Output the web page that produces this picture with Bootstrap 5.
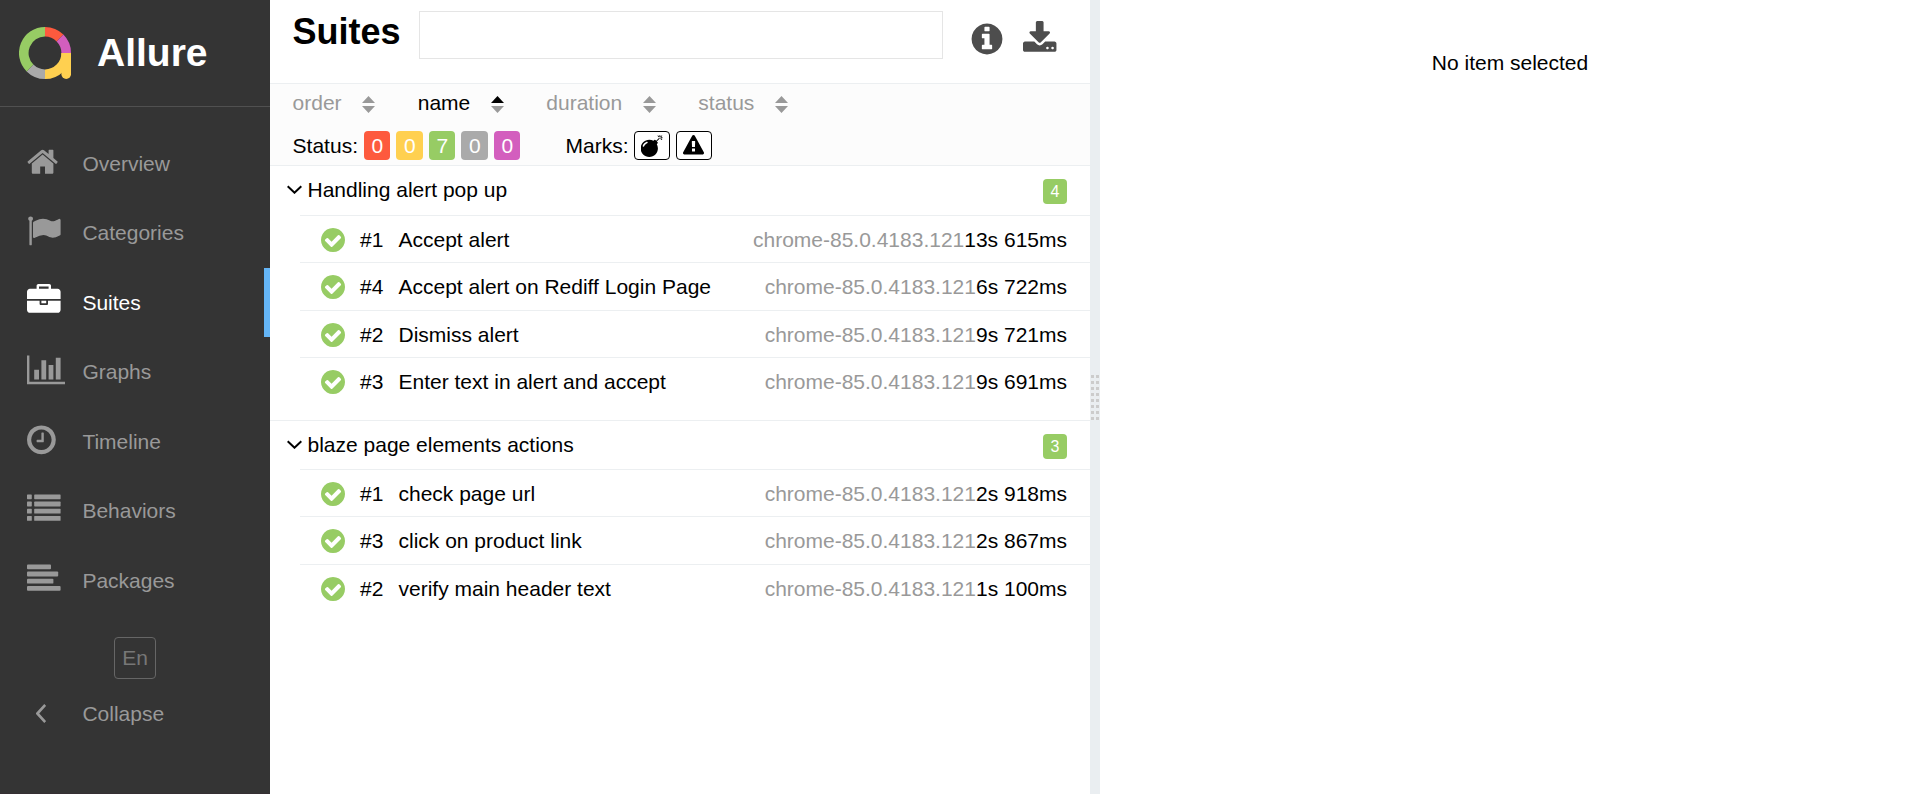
<!DOCTYPE html>
<html lang="en">
<head>
<meta charset="utf-8">
<title>Allure Report</title>
<link href="https://cdn.jsdelivr.net/npm/bootstrap@5.3.0/dist/css/bootstrap.min.css" rel="stylesheet">
<style>
body{font-family:"Liberation Sans",Arial,sans-serif;font-size:21px;line-height:30px;color:#000;height:794px;overflow:hidden}
svg{display:block;fill:currentColor;flex:none}
.side{width:270px;background:#343434;color:#999;border-bottom:1px solid #352f33}
.brand{height:107px;border-bottom:1px solid #505050;padding-left:19px;color:#fff}
.brand svg{margin-top:27px}
.brand-name{font-size:39px;font-weight:700;line-height:44px;margin:31px 0 0 26px}
.menu{padding-top:21.5px}
.side-link{height:69.6px;padding-left:27px;color:inherit;text-decoration:none}
.side-link .ico{width:55.4px;padding-top:16px}
.side-link .lbl{padding-top:20px}
.side-link.active{color:#fff;box-shadow:inset -6px 0 #64b5f6}
.lang{width:42px;height:42px;border:1px solid #666;border-radius:4px;color:#777;margin:21px 0 0 114px;line-height:40px}
.collapse-link{padding-left:36px;margin-top:20px}
.collapse-link svg{margin:5px 36.4px 0 0}
.list-pane{width:820px}
.head{height:84px;border-bottom:1px solid #eceff1;padding-left:22.5px}
.head h1{font-size:36px;font-weight:700;line-height:42px;margin:11px 0 0;width:126.5px}
.search{width:524px;height:48px;border:1px solid #e5e5e5;border-radius:0;margin-top:11px;padding:0}
.tools{color:#4d4d4d;margin:21px 0 0 26px;gap:18px}
.bar{height:82px;background:#fcfcfc;border-bottom:1px solid #eceff1;padding:4px 0 0 22.6px}
.sorter{color:#999;gap:20.6px;margin-right:42.5px}
.sorter.on{color:#000}
.sorts{height:30px}
.filters{margin-top:13px;height:29px}
.chip{width:26.5px;height:29px;border-radius:4px;color:#fff;line-height:29px;margin-right:6px}
.failed{background:#fd5a3e}.broken{background:#ffd050}.passed{background:#97cc64}.skipped{background:#aaa}.unknown{background:#d35ebe}
.status-lbl{width:71.4px}
.marks-lbl{width:68.5px;margin-left:39px}
.mark-btn{width:36px;height:29px;border:1px solid #000;border-radius:4px;background:#fff;margin-right:6px}
.suite-head{height:49.2px;padding:0 23px 0 17px}
.suite-head svg{margin:19px 5.5px 0 0}
.suite-head .ttl{padding-top:9px}
.count{width:24px;height:25px;border-radius:4px;color:#fff;font-size:16px;line-height:25px;margin-top:13px}
.suite{padding-bottom:15.8px}
.suite + .suite{border-top:1px solid #eceff1}
.suite + .suite .suite-head{height:48.5px}
.test-row{height:47.2px;border-top:1px solid #eceff1;margin-left:30px;padding:9px 23px 0 19px}
.test-row svg{color:#97cc64;margin:1px 13px 0 0}
.num{width:38.5px}
.env{color:#999}
.gutter{width:10px;background:#eaeef1}
.grip{width:8px;height:45px;background:repeating-linear-gradient(90deg,transparent 0 3px,#eaeef1 3px 5px),repeating-linear-gradient(#ccc 0 3px,transparent 3px 6px)}
.detail{padding-top:48px}
</style>
</head>
<body class="d-flex bg-white">
<svg width="0" height="0" class="position-absolute">
<defs>
<symbol id="ok" viewBox="0 0 1792 1792"><path d="M1412 734q0-28-18-46l-91-90q-19-19-45-19t-45 19l-408 407-226-226q-19-19-45-19t-45 19l-91 90q-18 18-18 46 0 27 18 45l362 362q19 19 45 19 27 0 46-19l543-543q18-18 18-45zm252 162q0 209-103 385.5t-279.5 279.5-385.5 103-385.5-103-279.5-279.5-103-385.5 103-385.5 279.5-279.5 385.5-103 385.5 103 279.5 279.5 103 385.5z"/></symbol>
<symbol id="down" viewBox="0 0 15 9"><path d="M.7 1.2 7.5 7.7 14.3 1.2" fill="none" stroke="#000" stroke-width="2"/></symbol>
</defs>
</svg>

<nav class="side h-100 flex-shrink-0">
  <div class="brand d-flex">
    <svg width="52" height="52" viewBox="0 0 52 52" fill="none">
      <g fill="none" stroke-width="9.6">
      <path stroke="#ffd050" d="M47.2 26A21.2 21.2 0 0 1 26 47.2"/>
      <path stroke="#aaa" d="M26 47.2A21.2 21.2 0 0 1 11 41"/>
      <path stroke="#97cc64" d="M11 41A21.2 21.2 0 0 1 26 4.8"/>
      <path stroke="#fd5a3e" d="M26 4.8A21.2 21.2 0 0 1 41 11"/>
      <path stroke="#d35ebe" d="M41 11A21.2 21.2 0 0 1 47.2 26"/></g>
      <path fill="#ffd050" d="M42.4 26H52V47.2a4.8 4.8 0 0 1-9.6 0z"/>
    </svg>
    <div class="brand-name">Allure</div>
  </div>
  <div class="menu d-flex flex-column">
    <a class="side-link d-flex"><span class="ico"><svg width="33.6" height="33.6" viewBox="64 0 1792 1792"><path d="M1472 992v480q0 26-19 45t-45 19h-384v-384h-256v384h-384q-26 0-45-19t-19-45v-480q0-1 .5-3t.5-3l575-474 575 474q1 2 1 6zm223-69l-62 74q-8 9-21 11h-3q-13 0-21-7l-692-577-692 577q-12 8-24 7-13-2-21-11l-62-74q-8-10-7-23.5t11-21.5l719-599q32-26 76-26t76 26l244 204v-195q0-14 9-23t23-9h192q14 0 23 9t9 23v408l219 182q10 8 11 21.5t-7 23.5z"/></svg></span><span class="lbl">Overview</span></a>
    <a class="side-link d-flex"><span class="ico"><svg width="33.6" height="33.6" viewBox="0 0 1792 1792"><path d="M320 256q0 72-64 110v1266q0 13-9.5 22.5t-22.5 9.5h-64q-13 0-22.5-9.5t-9.5-22.5v-1266q-64-38-64-110 0-53 37.5-90.5t90.5-37.5 90.5 37.5 37.5 90.5zm1472 64v763q0 25-12.5 38.5t-39.5 27.5q-215 116-369 116-61 0-123.5-22t-108.5-48-115.5-48-142.5-22q-192 0-464 146-17 9-33 9-26 0-45-19t-19-45v-742q0-32 31-55 21-14 79-43 236-120 421-120 107 0 200 29t219 88q38 19 88 19 54 0 117.5-21t110-47 88-47 54.5-21q26 0 45 19t19 45z"/></svg></span><span class="lbl">Categories</span></a>
    <a class="side-link active d-flex"><span class="ico"><svg width="33.6" height="33.6" viewBox="0 0 1792 1792"><path d="M640 256h512v-128h-512v128zm1152 640v480q0 66-47 113t-113 47h-1472q-66 0-113-47t-47-113v-480h672v160q0 26 19 45t45 19h320q26 0 45-19t19-45v-160h672zm-768 0v128h-256v-128h256zm768-480v384h-1792v-384q0-66 47-113t113-47h352v-160q0-40 28-68t68-28h576q40 0 68 28t28 68v160h352q66 0 113 47t47 113z"/></svg></span><span class="lbl">Suites</span></a>
    <a class="side-link d-flex"><span class="ico"><svg width="38.4" height="33.6" viewBox="0 0 2048 1792"><path d="M640 896v512h-256v-512h256zm384-512v1024h-256v-1024h256zm1024 1152v128h-2048v-1536h128v1408h1920zm-640-896v768h-256v-768h256zm384-384v1152h-256v-1152h256z"/></svg></span><span class="lbl">Graphs</span></a>
    <a class="side-link d-flex"><span class="ico"><svg width="33.6" height="33.6" viewBox="128 0 1792 1792"><path d="M1024 544v448q0 14-9 23t-23 9h-320q-14 0-23-9t-9-23v-64q0-14 9-23t23-9h224v-352q0-14 9-23t23-9h64q14 0 23 9t9 23zm416 352q0-148-73-273t-198-198-273-73-273 73-198 198-73 273 73 273 198 198 273 73 273-73 198-198 73-273zm224 0q0 209-103 385.5t-279.5 279.5-385.5 103-385.5-103-279.5-279.5-103-385.5 103-385.5 279.5-279.5 385.5-103 385.5 103 279.5 279.5 103 385.5z"/></svg></span><span class="lbl">Timeline</span></a>
    <a class="side-link d-flex"><span class="ico"><svg width="33.6" height="33.6" viewBox="0 0 1792 1792"><g><rect y="128" width="256" height="256" rx="32"/><rect y="512" width="256" height="256" rx="32"/><rect y="896" width="256" height="256" rx="32"/><rect y="1280" width="256" height="256" rx="32"/><rect x="384" y="128" width="1408" height="256" rx="32"/><rect x="384" y="512" width="1408" height="256" rx="32"/><rect x="384" y="896" width="1408" height="256" rx="32"/><rect x="384" y="1280" width="1408" height="256" rx="32"/></g></svg></span><span class="lbl">Behaviors</span></a>
    <a class="side-link d-flex"><span class="ico"><svg width="33.6" height="33.6" viewBox="0 0 1792 1792"><rect y="128" width="1280" height="256" rx="50"/><rect y="512" width="1664" height="256" rx="50"/><rect y="896" width="1408" height="256" rx="50"/><rect y="1280" width="1792" height="256" rx="50"/></svg></span><span class="lbl">Packages</span></a>
  </div>
  <div class="lang text-center">En</div>
  <div class="collapse-link d-flex"><svg width="10" height="19" viewBox="0 0 10 19"><path d="M9.2 1 1.4 9.5 9.2 18" fill="none" stroke="#999" stroke-width="2.6"/></svg><span>Collapse</span></div>
</nav>

<main class="list-pane h-100 flex-shrink-0">
  <div class="head d-flex">
    <h1>Suites</h1>
    <input class="search form-control flex-shrink-0" type="text" aria-label="Search">
    <div class="tools d-flex">
      <svg width="36" height="36" viewBox="0 0 1792 1792"><path d="M1152 1376v-160q0-14-9-23t-23-9h-96v-512q0-14-9-23t-23-9h-320q-14 0-23 9t-9 23v160q0 14 9 23t23 9h96v320h-96q-14 0-23 9t-9 23v160q0 14 9 23t23 9h448q14 0 23-9t9-23zm-128-896v-160q0-14-9-23t-23-9h-192q-14 0-23 9t-9 23v160q0 14 9 23t23 9h192q14 0 23-9t9-23zm640 416q0 209-103 385.5t-279.5 279.5-385.5 103-385.5-103-279.5-279.5-103-385.5 103-385.5 279.5-279.5 385.5-103 385.5 103 279.5 279.5 103 385.5z"/></svg>
      <svg width="36" height="36" viewBox="64 0 1792 1792"><path d="M1344 1344q0-26-19-45t-45-19-45 19-19 45 19 45 45 19 45-19 19-45zm256 0q0-26-19-45t-45-19-45 19-19 45 19 45 45 19 45-19 19-45zm128-224v320q0 40-28 68t-68 28h-1472q-40 0-68-28t-28-68v-320q0-40 28-68t68-28h465l135 136q58 56 136 56t136-56l136-136h464q40 0 68 28t28 68zm-325-569q17 41-14 70l-448 448q-18 19-45 19t-45-19l-448-448q-31-29-14-70 17-39 59-39h256v-448q0-26 19-45t45-19h256q26 0 45 19t19 45v448h256q42 0 59 39z"/></svg>
    </div>
  </div>
  <div class="bar">
    <div class="sorts d-flex">
      <div class="sorter d-flex"><span>order</span><svg class="mt-2" width="13" height="17" viewBox="0 0 13 17"><path fill="#999" d="M0 7 6.5 0 13 7zM0 10H13L6.5 17z"/></svg></div>
      <div class="sorter on d-flex"><span>name</span><svg class="mt-2" width="13" height="17" viewBox="0 0 13 17"><path d="M0 7 6.5 0 13 7z"/><path fill="#999" d="M0 10H13L6.5 17z"/></svg></div>
      <div class="sorter d-flex"><span>duration</span><svg class="mt-2" width="13" height="17" viewBox="0 0 13 17"><path fill="#999" d="M0 7 6.5 0 13 7zM0 10H13L6.5 17z"/></svg></div>
      <div class="sorter d-flex"><span>status</span><svg class="mt-2" width="13" height="17" viewBox="0 0 13 17"><path fill="#999" d="M0 7 6.5 0 13 7zM0 10H13L6.5 17z"/></svg></div>
    </div>
    <div class="filters d-flex">
      <span class="status-lbl">Status:</span>
      <span class="chip failed text-center">0</span><span class="chip broken text-center">0</span><span class="chip passed text-center">7</span><span class="chip skipped text-center">0</span><span class="chip unknown text-center">0</span>
      <span class="marks-lbl">Marks:</span>
      <span class="mark-btn d-flex justify-content-center align-items-center"><svg width="22" height="22" viewBox="30 0 1792 1792"><path d="M571 589q-10-25-34-35t-49 0q-108 44-191 127t-127 191q-10 25 0 49t35 34q13 5 24 5 42 0 60-40 34-84 98.500-148.500t148.500-98.500q25-11 35-35t0-49zm942-356l46 46-244 243 68 68q19 19 19 45.500t-19 45.500l-64 64q89 161 89 343 0 143-55.500 273.500t-150 225-225 150-273.500 55.500-273.500-55.500-225-150-150-225-55.500-273.500 55.500-273.500 150-225 225-150 273.500-55.500q182 0 343 89l64-64q19-19 45.500-19t45.500 19l68 68zm8-56q-10 10-22 10-13 0-23-10l-91-90q-9-10-9-23t9-23q10-9 23-9t23 9l90 91q10 9 10 22.500t-10 22.500zm230 230q-11 9-23 9t-23-9l-90-91q-10-9-10-22.500t10-22.500q9-10 22.500-10t22.500 10l91 90q9 10 9 23t-9 23zm41-183q0 14-9 23t-23 9h-96q-14 0-23-9t-9-23 9-23 23-9h96q14 0 23 9t9 23zm-192-192v96q0 14-9 23t-23 9-23-9-9-23v-96q0-14 9-23t23-9 23 9 9 23zm151 55l-91 90q-10 10-22 10-13 0-23-10-10-9-10-22.500t10-22.500l90-91q10-9 23-9t23 9q9 10 9 23t-9 23z"/></svg></span>
      <span class="mark-btn d-flex justify-content-center align-items-center"><svg width="21" height="21" viewBox="0 0 1792 1792"><path d="M1024 1375v-190q0-14-9.500-23.500t-22.500-9.500h-192q-13 0-22.500 9.500t-9.500 23.500v190q0 14 9.500 23.500t22.500 9.500h192q13 0 22.500-9.500t9.500-23.500zm-2-374l18-459q0-12-10-19-13-11-24-11h-220q-11 0-24 11-10 7-10 21l17 457q0 10 10 16.500t24 6.500h185q14 0 23.500-6.500t10.500-16.500zm-14-934l768 1408q35 63-2 126-17 29-46.500 46t-63.500 17h-1536q-34 0-63.500-17t-46.500-46q-37-63-2-126l768-1408q17-31 47-49t65-18 65 18 47 49z"/></svg></span>
    </div>
  </div>

  <section class="suite">
    <div class="suite-head d-flex"><svg width="15" height="9"><use href="#down"/></svg><span class="ttl">Handling alert pop up</span><span class="count passed text-center ms-auto">4</span></div>
    <div class="test-row d-flex"><svg width="28" height="28"><use href="#ok"/></svg><span class="num">#1</span><span class="me-auto">Accept alert</span><span class="env">chrome-85.0.4183.121</span><span>13s 615ms</span></div>
    <div class="test-row d-flex"><svg width="28" height="28"><use href="#ok"/></svg><span class="num">#4</span><span class="me-auto">Accept alert on Rediff Login Page</span><span class="env">chrome-85.0.4183.121</span><span>6s 722ms</span></div>
    <div class="test-row d-flex"><svg width="28" height="28"><use href="#ok"/></svg><span class="num">#2</span><span class="me-auto">Dismiss alert</span><span class="env">chrome-85.0.4183.121</span><span>9s 721ms</span></div>
    <div class="test-row d-flex"><svg width="28" height="28"><use href="#ok"/></svg><span class="num">#3</span><span class="me-auto">Enter text in alert and accept</span><span class="env">chrome-85.0.4183.121</span><span>9s 691ms</span></div>
  </section>
  <section class="suite">
    <div class="suite-head d-flex"><svg width="15" height="9"><use href="#down"/></svg><span class="ttl">blaze page elements actions</span><span class="count passed text-center ms-auto">3</span></div>
    <div class="test-row d-flex"><svg width="28" height="28"><use href="#ok"/></svg><span class="num">#1</span><span class="me-auto">check page url</span><span class="env">chrome-85.0.4183.121</span><span>2s 918ms</span></div>
    <div class="test-row d-flex"><svg width="28" height="28"><use href="#ok"/></svg><span class="num">#3</span><span class="me-auto">click on product link</span><span class="env">chrome-85.0.4183.121</span><span>2s 867ms</span></div>
    <div class="test-row d-flex"><svg width="28" height="28"><use href="#ok"/></svg><span class="num">#2</span><span class="me-auto">verify main header text</span><span class="env">chrome-85.0.4183.121</span><span>1s 100ms</span></div>
  </section>
</main>

<div class="gutter h-100 flex-shrink-0 d-flex align-items-center justify-content-center"><div class="grip"></div></div>
<aside class="detail flex-grow-1 text-center">No item selected</aside>
<script src="https://cdn.jsdelivr.net/npm/bootstrap@5.3.0/dist/js/bootstrap.bundle.min.js"></script>
</body>
</html>
